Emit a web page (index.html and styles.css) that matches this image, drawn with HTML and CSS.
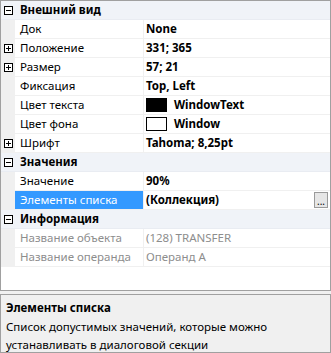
FILE: index.html
```html
<!DOCTYPE html>
<html lang="ru">
  <head>
    <meta charset="UTF-8" />
    <title>Свойства</title>
    <link rel="stylesheet" href="styles.css">
  </head>
  <body>
    <div class="grid">
      <div class="row cat">
        <span class="gut"><span class="box minus"></span></span>
        <span class="cat-name">Внешний вид</span>
      </div>
      <div class="row">
        <span class="gut"></span>
        <span class="name">Док</span>
        <span class="val">None</span>
      </div>
      <div class="row">
        <span class="gut"><span class="box plus"></span></span>
        <span class="name">Положение</span>
        <span class="val">331; 365</span>
      </div>
      <div class="row">
        <span class="gut"><span class="box plus"></span></span>
        <span class="name">Размер</span>
        <span class="val">57; 21</span>
      </div>
      <div class="row">
        <span class="gut"></span>
        <span class="name">Фиксация</span>
        <span class="val">Top, Left</span>
      </div>
      <div class="row">
        <span class="gut"></span>
        <span class="name">Цвет текста</span>
        <span class="val"><span class="swatch black"></span>WindowText</span>
      </div>
      <div class="row">
        <span class="gut"></span>
        <span class="name">Цвет фона</span>
        <span class="val"><span class="swatch white"></span>Window</span>
      </div>
      <div class="row">
        <span class="gut"><span class="box plus"></span></span>
        <span class="name">Шрифт</span>
        <span class="val">Tahoma; 8,25pt</span>
      </div>
      <div class="row cat">
        <span class="gut"><span class="box minus"></span></span>
        <span class="cat-name">Значения</span>
      </div>
      <div class="row">
        <span class="gut"></span>
        <span class="name">Значение</span>
        <span class="val">90%</span>
      </div>
      <div class="row">
        <span class="gut"></span>
        <span class="name selected">Элементы списка</span>
        <span class="val">(Коллекция)<span class="dots">...</span></span>
      </div>
      <div class="row cat">
        <span class="gut"><span class="box minus"></span></span>
        <span class="cat-name">Информация</span>
      </div>
      <div class="row">
        <span class="gut"></span>
        <span class="name muted">Название объекта</span>
        <span class="val muted">(128) TRANSFER</span>
      </div>
      <div class="row">
        <span class="gut"></span>
        <span class="name muted">Название операнда</span>
        <span class="val muted">Операнд А</span>
      </div>
    </div>
    <div class="desc">
      <div class="desc-title">Элементы списка</div>
      <div class="desc-text">Список допустимых значений, которые можно устанавливать в диалоговой секции</div>
    </div>
  </body>
</html>
```

FILE: styles.css
```css
body {
  margin: 0;
  width: 331px;
  height: 353px;
  background: #f0f0f0;
  font-family: "Noto Sans", "Open Sans", sans-serif;
  font-size: 11.5px;
  color: #000;
}
.grid {
  box-sizing: border-box;
  height: 291px;
  border: 1px solid #a0a0a0;
  background: #fff;
}
.row {
  display: grid;
  grid-template-columns: 14px 129px 1fr;
  height: 18px;
  border-bottom: 1px solid #f0f0f0;
  line-height: 18px;
}
.row.cat {
  background: #f0f3f8;
  border-bottom-color: #e9ecf2;
}
.gut {
  background: #f0f0f0;
  display: flex;
  align-items: center;
  justify-content: center;
}
.cat .gut {
  background: transparent;
}
.box {
  position: relative;
  box-sizing: border-box;
  width: 9px;
  height: 9px;
  border: 1px solid #000;
  background: #fff;
  margin-left: 1px;
}
.box::before,
.box.plus::after {
  content: "";
  position: absolute;
  background: #000;
}
.box::before {
  left: 1px;
  top: 3px;
  width: 5px;
  height: 1px;
}
.box.plus::after {
  left: 3px;
  top: 1px;
  width: 1px;
  height: 5px;
}
.cat-name {
  grid-column: 2 / 4;
  font-weight: bold;
  padding-left: 5px;
}
.name {
  padding-left: 5px;
  border-right: 1px solid #f0f0f0;
  white-space: nowrap;
  overflow: hidden;
}
.name.selected {
  background: #3399ff;
  color: #fff;
}
.val {
  display: flex;
  align-items: center;
  padding-left: 2px;
  font-weight: bold;
  white-space: nowrap;
}
.muted {
  color: #8d8d8d;
  font-weight: normal;
}
.swatch {
  box-sizing: border-box;
  width: 21px;
  height: 14px;
  border: 1px solid #000;
  margin-right: 7px;
}
.swatch.black {
  background: #000;
}
.swatch.white {
  background: #fff;
}
.dots {
  margin-left: auto;
  margin-right: 2px;
  box-sizing: border-box;
  width: 14px;
  height: 16px;
  border: 1px solid #9a9a9a;
  background: #e6e6e6;
  font-weight: normal;
  font-size: 10px;
  line-height: 16px;
  text-align: center;
}
.desc {
  box-sizing: border-box;
  height: 59px;
  margin-top: 3px;
  border: 1px solid #a0a0a0;
  padding: 4px 5px 0;
  background: #f0f0f0;
  line-height: 18px;
}
.desc-title {
  font-weight: bold;
  margin-bottom: 1px;
}
```
